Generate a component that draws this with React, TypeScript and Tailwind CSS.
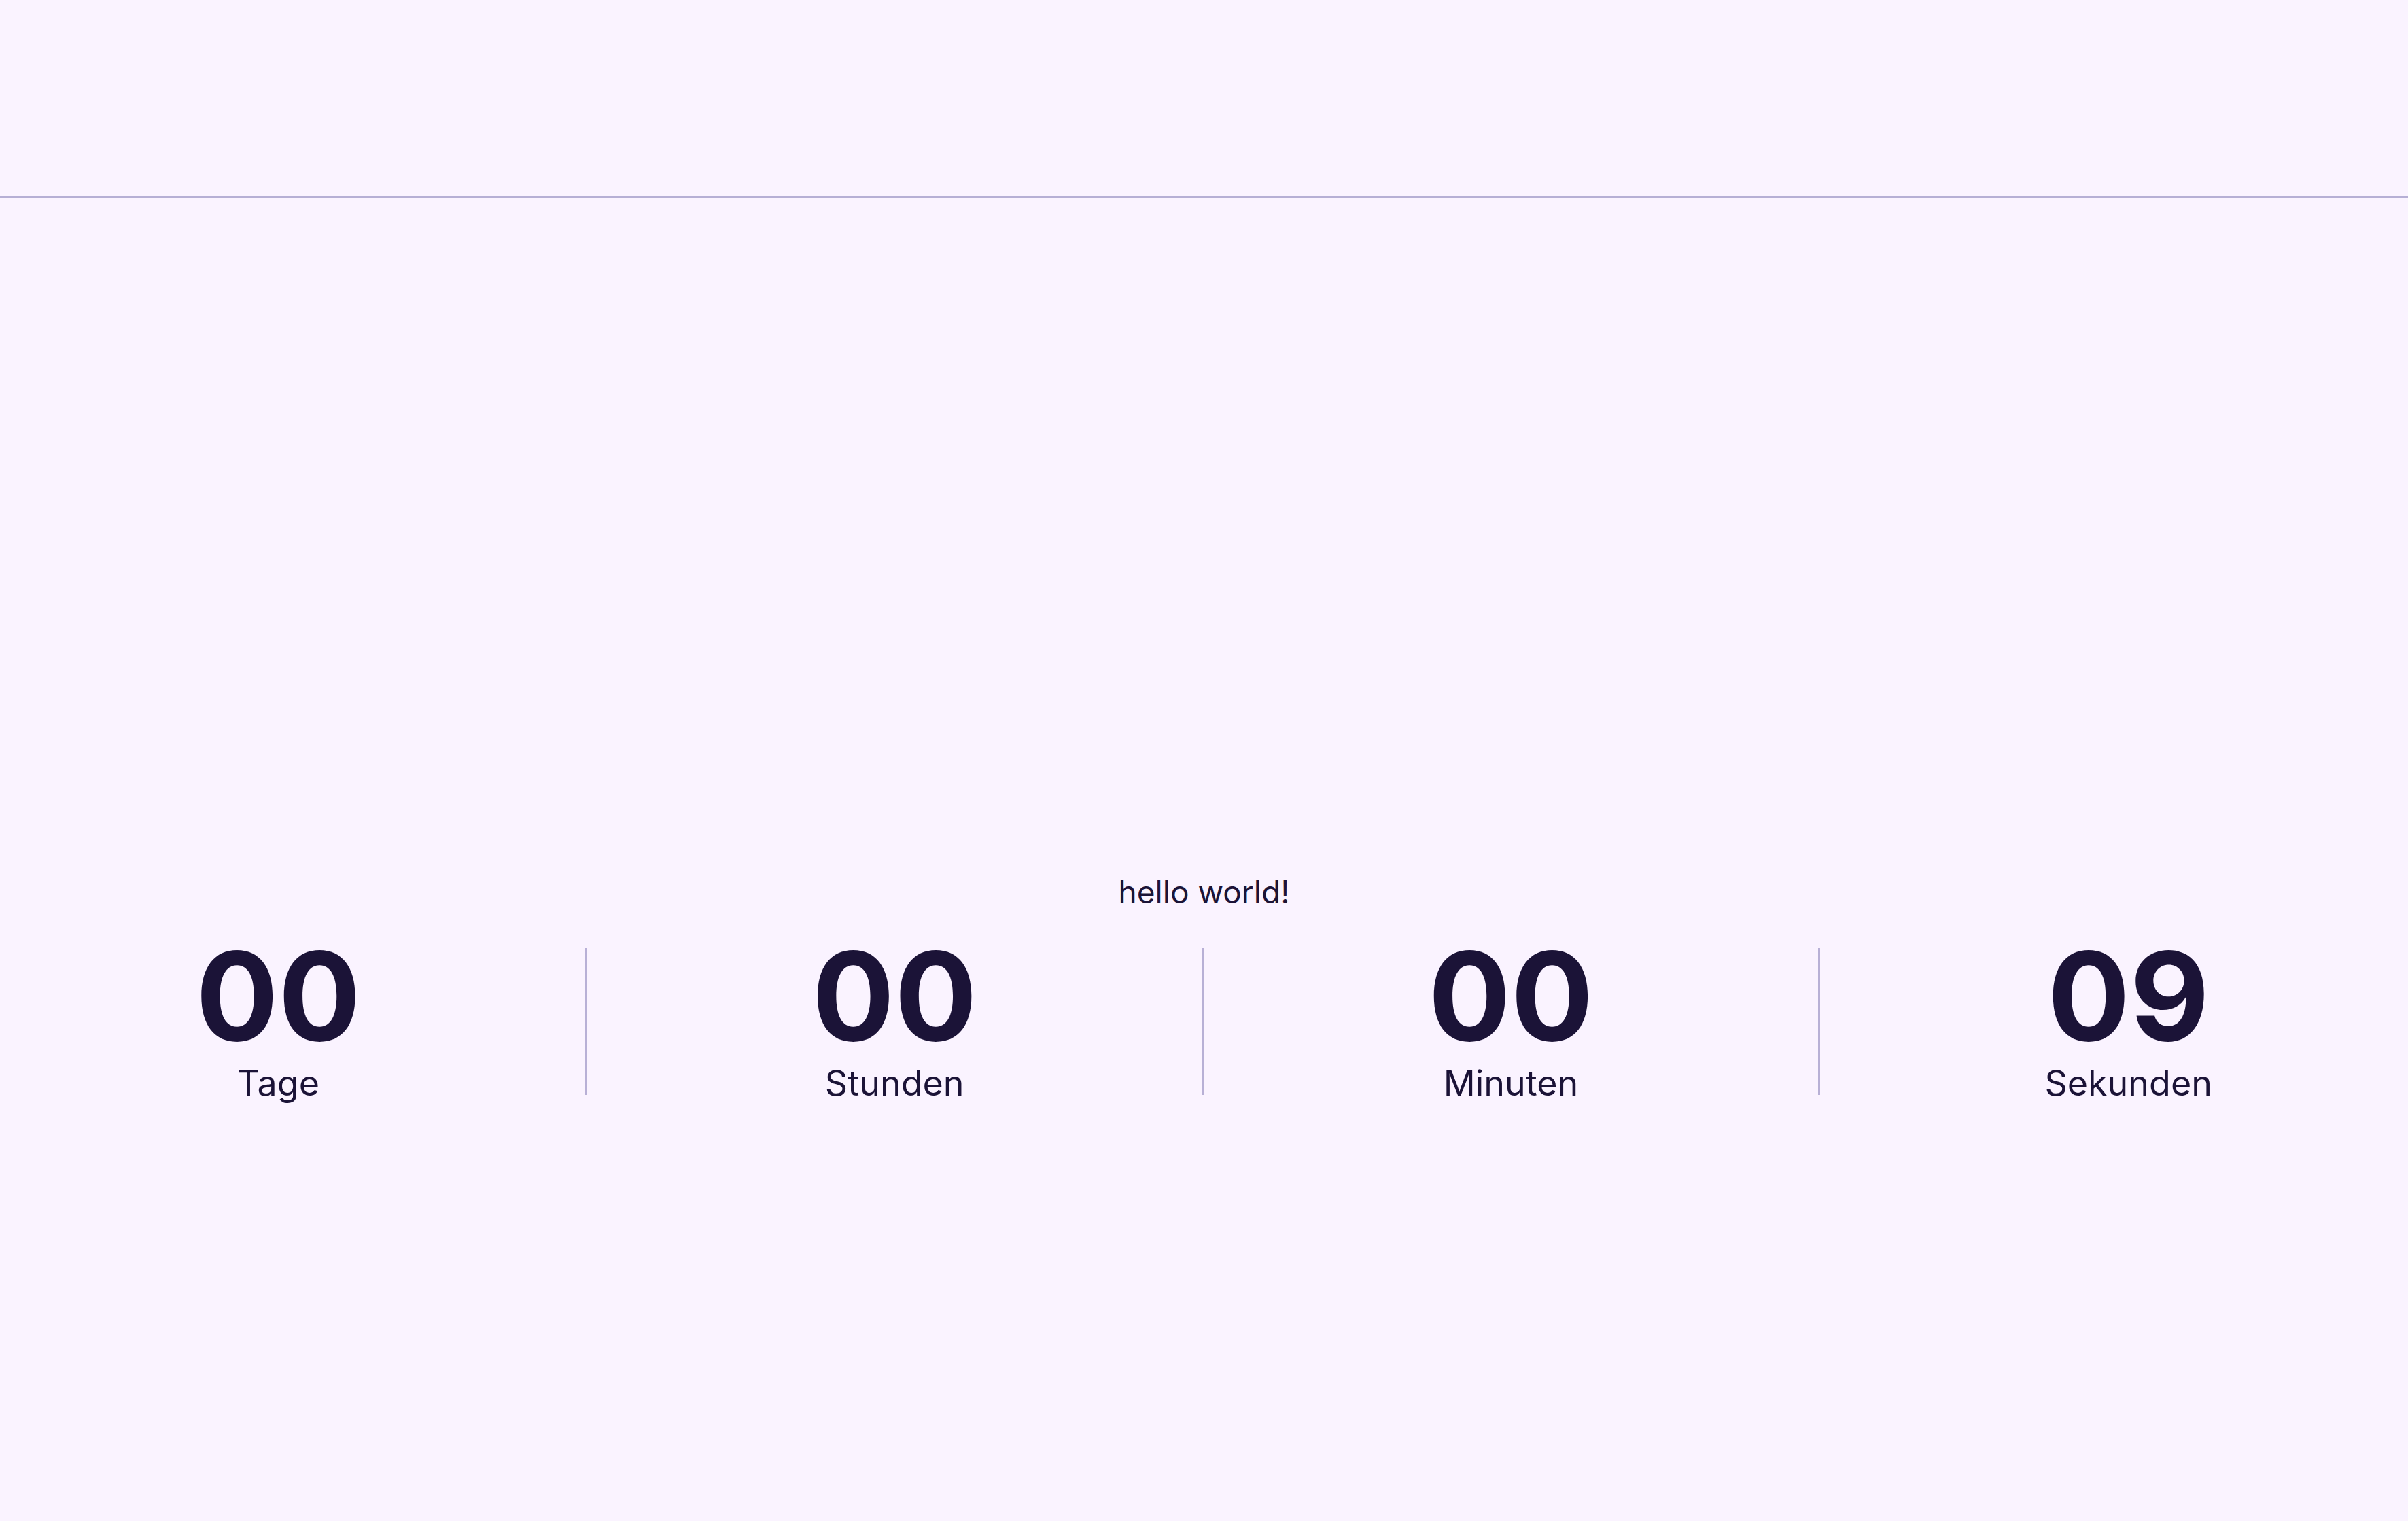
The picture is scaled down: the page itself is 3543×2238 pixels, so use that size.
import React from "react";

const units = [
  { value: "00", label: "Tage" },
  { value: "00", label: "Stunden" },
  { value: "00", label: "Minuten" },
  { value: "09", label: "Sekunden" },
];

function TimeUnit({ value, label }: { value: string; label: string }) {
  return (
    <div className="flex flex-col items-center">
      <span className="text-[180px] font-bold leading-[150px]">{value}</span>
      <span className="mt-[27px] text-[52px] leading-none">{label}</span>
    </div>
  );
}

export default function App() {
  return (
    <div
      className="min-h-screen overflow-hidden bg-[#faf3ff] text-[#1b1337]"
      style={{ fontFamily: "Inter, 'Noto Sans', sans-serif" }}
    >
      {/* header bar */}
      <header className="h-[291px] border-b-[3px] border-[#b6afd5]" />

      <main className="flex flex-col items-center pt-[998px]">
        <p className="text-[46px] leading-none">hello world!</p>

        {/* countdown */}
        <div className="mt-[56px] flex w-[2967px] items-start justify-between">
          {units.map((u, i) => (
            <React.Fragment key={u.label}>
              {i > 0 && (
                <div className="mt-[4px] h-[216px] w-[3px] bg-[#b8b0d6]" />
              )}
              <TimeUnit value={u.value} label={u.label} />
            </React.Fragment>
          ))}
        </div>
      </main>
    </div>
  );
}
